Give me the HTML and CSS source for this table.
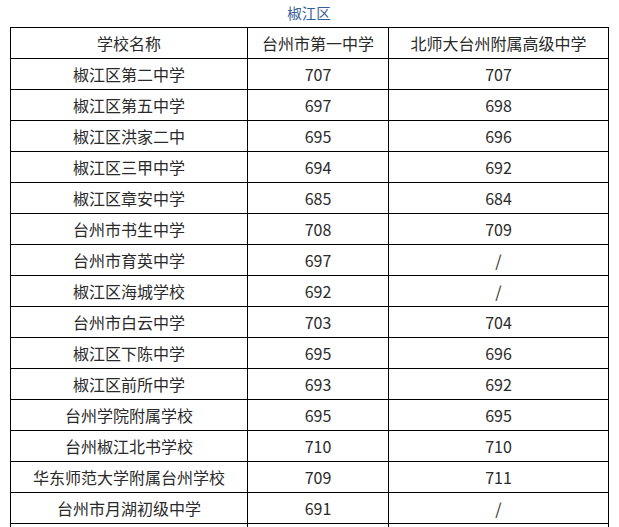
FILE: index.html
```html
<!DOCTYPE html>
<html lang="zh">
<head>
<meta charset="utf-8">
<title>椒江区</title>
<link rel="stylesheet" href="styles.css">
</head>
<body>
<div class="page">
  <div class="title">椒江区</div>
  <table class="scores">
    <colgroup>
      <col class="c1"><col class="c2"><col class="c3">
    </colgroup>
    <thead>
      <tr><th>学校名称</th><th>台州市第一中学</th><th>北师大台州附属高级中学</th></tr>
    </thead>
    <tbody>
      <tr><td>椒江区第二中学</td><td>707</td><td>707</td></tr>
      <tr><td>椒江区第五中学</td><td>697</td><td>698</td></tr>
      <tr><td>椒江区洪家二中</td><td>695</td><td>696</td></tr>
      <tr><td>椒江区三甲中学</td><td>694</td><td>692</td></tr>
      <tr><td>椒江区章安中学</td><td>685</td><td>684</td></tr>
      <tr><td>台州市书生中学</td><td>708</td><td>709</td></tr>
      <tr><td>台州市育英中学</td><td>697</td><td>/</td></tr>
      <tr><td>椒江区海城学校</td><td>692</td><td>/</td></tr>
      <tr><td>台州市白云中学</td><td>703</td><td>704</td></tr>
      <tr><td>椒江区下陈中学</td><td>695</td><td>696</td></tr>
      <tr><td>椒江区前所中学</td><td>693</td><td>692</td></tr>
      <tr><td>台州学院附属学校</td><td>695</td><td>695</td></tr>
      <tr><td>台州椒江北书学校</td><td>710</td><td>710</td></tr>
      <tr><td>华东师范大学附属台州学校</td><td>709</td><td>711</td></tr>
      <tr><td>台州市月湖初级中学</td><td>691</td><td>/</td></tr>
      <tr class="tail"><td></td><td></td><td></td></tr>
    </tbody>
  </table>
</div>
</body>
</html>
```
FILE: styles.css
```css
html, body {
  margin: 0;
  padding: 0;
  background: #ffffff;
  overflow: hidden;
}
.page {
  padding: 0 0 0 10px;
  width: 598px;
  font-family: "Noto Sans CJK SC", "Liberation Sans", sans-serif;
  color: #2a2a2a;
}
.title {
  height: 27px;
  line-height: 25px;
  text-align: center;
  font-size: 14.5px;
  color: #3a6099;
}
.scores {
  border-collapse: collapse;
  table-layout: fixed;
  width: 598px;
  font-size: 16px;
}
.c1 { width: 237px; }
.c2 { width: 141px; }
.c3 { width: 220px; }
.scores th,
.scores td {
  border: 1px solid #000000;
  height: 30px;
  padding: 0;
  text-align: center;
  vertical-align: middle;
  font-weight: normal;
  line-height: 20px;
  white-space: nowrap;
}
```
